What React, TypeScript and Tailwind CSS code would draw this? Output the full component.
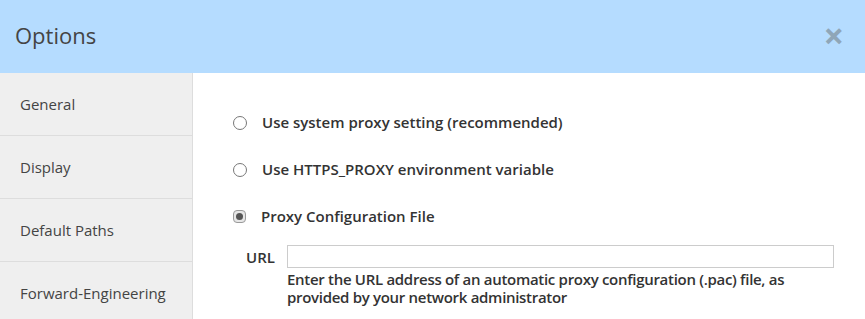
const navItems = ["General", "Display", "Default Paths", "Forward-Engineering"];

const proxyOptions = [
  { label: "Use system proxy setting (recommended)", checked: false },
  { label: "Use HTTPS_PROXY environment variable", checked: false },
  { label: "Proxy Configuration File", checked: true },
];

function Radio({ checked }: { checked: boolean }) {
  if (checked) {
    return (
      <span className="flex h-[13px] w-[13px] items-center justify-center rounded-[4px] border border-[#9a9a9a] bg-[#e6e6e6]">
        <span className="h-[7px] w-[7px] rounded-full bg-[#555]" />
      </span>
    );
  }
  return <span className="block h-[14px] w-[14px] rounded-full border border-[#777] bg-white" />;
}

export default function App() {
  return (
    <div className="flex h-[319px] w-[865px] flex-col overflow-hidden bg-white font-['Open_Sans',sans-serif]">
      <div className="flex h-[73px] shrink-0 items-center justify-between bg-[#b5dcff] pb-[3px] pl-[15px] pr-[21px]">
        <h1 className="text-[22px] text-[#444]">Options</h1>
        <span className="mt-[2px] text-[36px] font-bold leading-none text-[#8fa6b8]">×</span>
      </div>
      <div className="flex flex-1">
        <nav className="w-[193px] shrink-0 border-r border-[#ddd] bg-[#efefef]">
          {navItems.map((item) => (
            <div
              key={item}
              className="flex h-[63px] items-center border-b border-[#ddd] pl-[20px] pt-[1px] text-[15px] text-[#444]"
            >
              {item}
            </div>
          ))}
        </nav>
        <div className="flex-1 pt-[38px] pl-[40px] pr-[31px]">
          <div className="flex flex-col gap-[24px]">
            {proxyOptions.map((opt) => (
              <label key={opt.label} className="flex h-[23px] items-center gap-[15px]">
                <Radio checked={opt.checked} />
                <span className="text-[15px] font-semibold text-[#333]">{opt.label}</span>
              </label>
            ))}
          </div>
          <div className="mt-[17px] flex items-start">
            <span className="mt-[1px] w-[54px] pl-[13px] text-[15px] font-semibold text-[#333]">URL</span>
            <div className="flex-1">
              <input className="block h-[23px] w-full border border-[#ccc] px-2 text-[14px] outline-none" />
              <p className="mt-[2px] pr-[30px] text-[15px] font-semibold leading-[18px] tracking-[-0.3px] text-[#333]">
                Enter the URL address of an automatic proxy configuration (.pac) file, as provided by your network administrator
              </p>
            </div>
          </div>
        </div>
      </div>
    </div>
  );
}
